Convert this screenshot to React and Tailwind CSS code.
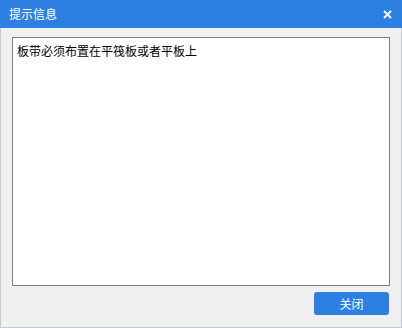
import React from "react";

const App = () => {
  return (
    <div
      className="w-[402px] h-[328px] flex flex-col bg-[#f0f0f0] border-x border-b border-[#c3cad6]"
      style={{ fontFamily: '"Noto Sans CJK SC", "Microsoft YaHei", sans-serif' }}
    >
      <div className="h-[28px] -mx-px bg-[#2d80e1] flex items-center justify-between pl-[9px] pr-[10px] text-white">
        <span className="text-[12px] leading-none">提示信息</span>
        <svg width="9" height="9" viewBox="0 0 9 9" className="mt-px">
          <path d="M1 1 L8 8 M8 1 L1 8" stroke="white" strokeWidth="1.8" />
        </svg>
      </div>
      <div className="flex-1 flex flex-col px-[11px] pt-[9px] pb-[11px]">
        <div className="h-[249px] w-[378px] bg-white border border-[#7f7f7f] px-[4px] pt-[5px] text-[12px] leading-[16px] text-black">
          板带必须布置在平筏板或者平板上
        </div>
        <div className="flex justify-end mt-[6px] pr-px">
          <button className="w-[75px] h-[23px] rounded-[3px] bg-[#2d80e1] text-white text-[12px] leading-none">
            关闭
          </button>
        </div>
      </div>
    </div>
  );
};

export default App;
